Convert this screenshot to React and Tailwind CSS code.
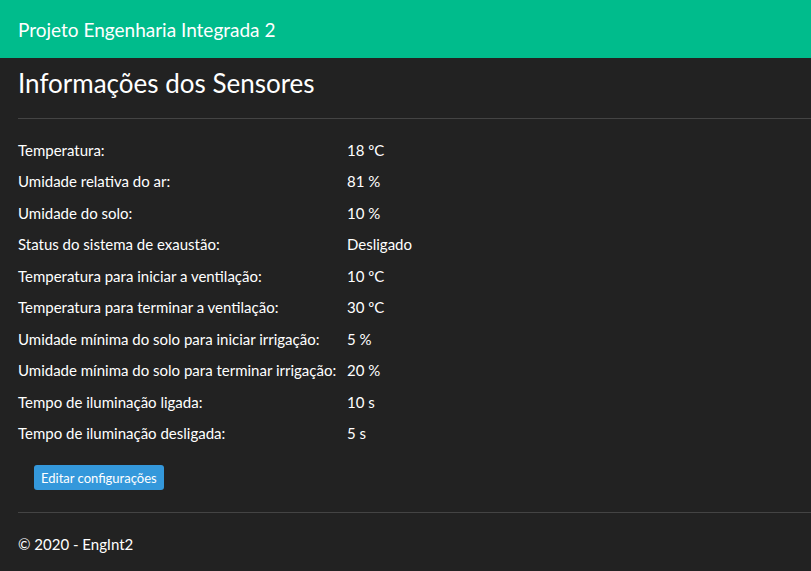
const rows = [
  ['Temperatura:', '18 ºC'],
  ['Umidade relativa do ar:', '81 %'],
  ['Umidade do solo:', '10 %'],
  ['Status do sistema de exaustão:', 'Desligado'],
  ['Temperatura para iniciar a ventilação:', '10 ºC'],
  ['Temperatura para terminar a ventilação:', '30 ºC'],
  ['Umidade mínima do solo para iniciar irrigação:', '5 %'],
  ['Umidade mínima do solo para terminar irrigação:', '20 %'],
  ['Tempo de iluminação ligada:', '10 s'],
  ['Tempo de iluminação desligada:', '5 s'],
]

export default function App() {
  return (
    <div className="min-h-screen bg-[#222222] text-white font-['Lato',sans-serif] text-[15px]">
      <nav className="h-[58px] bg-[#00bc8c] flex items-center px-[18px]">
        <span className="text-[19px] leading-none">Projeto Engenharia Integrada 2</span>
      </nav>

      <main className="pl-[18px]">
        <h2 className="text-[26px] leading-[1.2] pt-[10px] pb-[19px]">Informações dos Sensores</h2>
        <hr className="border-0 border-t border-[#444444]" />

        <div className="pt-[15px]">
          {rows.map(([label, value]) => (
            <div key={label} className="flex items-center h-[31.5px]">
              <span className="w-[329px]">{label}</span>
              <span>{value}</span>
            </div>
          ))}
        </div>

        <div className="pl-[16px] pt-[16px] pb-[22px]">
          <button className="bg-[#3498db] text-white text-[13px] leading-[24px] h-[25px] px-[7px] rounded-[3px]">
            Editar configurações
          </button>
        </div>

        <hr className="border-0 border-t border-[#444444]" />
        <footer className="pt-[20px]">© 2020 - EngInt2</footer>
      </main>
    </div>
  )
}
